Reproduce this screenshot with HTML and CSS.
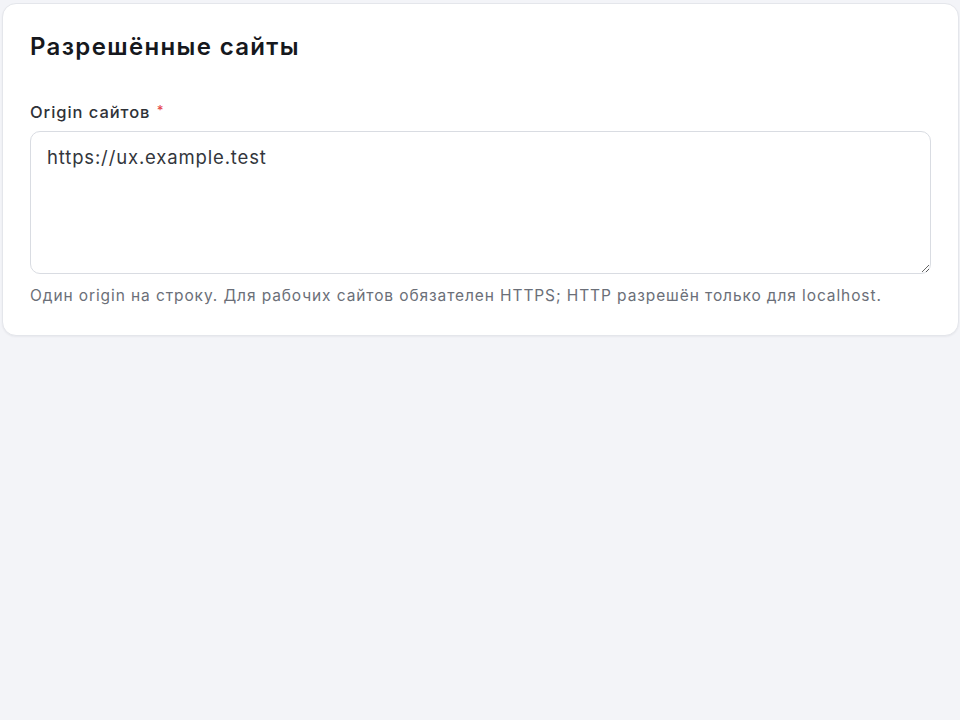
FILE: index.html
```html
<!DOCTYPE html>
<html lang="ru">
<head>
<meta charset="utf-8">
<title>Разрешённые сайты</title>
<link rel="stylesheet" href="styles.css">
</head>
<body>
<main class="page">
  <section class="card">
    <h2 class="card-title">Разрешённые сайты</h2>
    <div class="field">
      <label class="field-label" for="origins">Origin сайтов <span class="req">*</span></label>
      <textarea id="origins" class="field-input" rows="5">https://ux.example.test</textarea>
      <p class="field-hint">Один origin на строку. Для рабочих сайтов обязателен HTTPS; HTTP разрешён только для localhost.</p>
    </div>
  </section>
</main>
</body>
</html>
```

FILE: styles.css
```css
html, body {
  margin: 0;
  height: 100%;
}

body {
  background: #f3f4f8;
  font-family: Inter, "Noto Sans", sans-serif;
  color: #1d1f24;
}

.page {
  padding: 3px 1px 0 2px;
}

.card {
  background: #ffffff;
  border: 1px solid #e4e6eb;
  border-radius: 14px;
  box-shadow: 0 1px 2px rgba(20, 24, 35, 0.05);
  padding: 27px 27px 28px 27px;
}

.card-title {
  margin: 0 0 37px;
  font-size: 24px;
  line-height: 32px;
  font-weight: 600;
  letter-spacing: 1.35px;
  color: #16181d;
}

.field {
  display: flex;
  flex-direction: column;
}

.field-label {
  font-size: 16.5px;
  line-height: 20px;
  font-weight: 500;
  letter-spacing: 0.95px;
  color: #2f3238;
  margin-bottom: 9px;
}

.req {
  color: #e5484d;
  font-size: 13px;
  vertical-align: 3px;
  margin-left: 1px;
}

.field-input {
  display: block;
  box-sizing: border-box;
  width: 100%;
  height: 143px;
  margin: 0;
  padding: 12px 16px;
  border: 1px solid #d9dce2;
  border-radius: 10px;
  background: #ffffff;
  font-family: Inter, "Noto Sans", sans-serif;
  font-size: 18.5px;
  line-height: 26px;
  letter-spacing: 0.85px;
  color: #33363c;
  resize: vertical;
  outline: none;
}

.field-hint {
  margin: 11px 0 0;
  font-size: 15.5px;
  line-height: 22px;
  letter-spacing: 0.9px;
  color: #6b6f78;
}
```
